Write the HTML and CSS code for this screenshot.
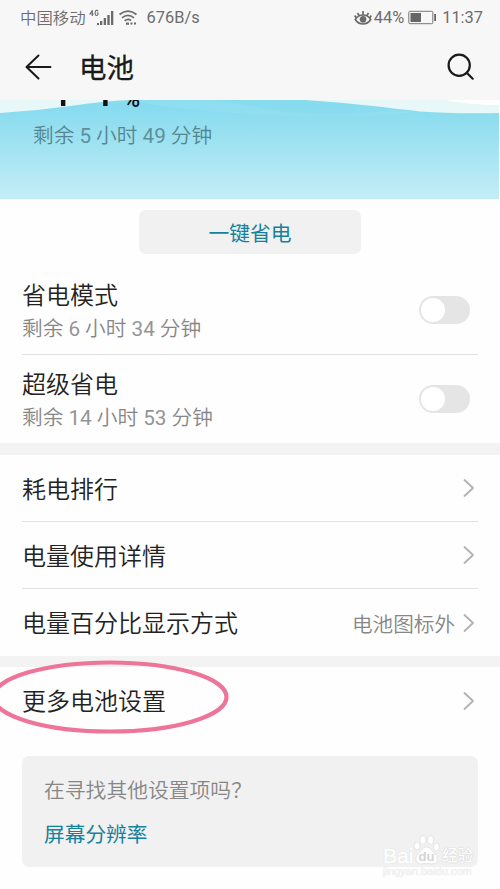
FILE: index.html
```html
<!DOCTYPE html>
<html lang="zh-CN">
<head>
<meta charset="utf-8">
<title>电池</title>
<link rel="stylesheet" href="styles.css">
</head>
<body>
<main class="screen">
  <div class="status">
    <span class="carrier">中国移动</span>
    <svg class="signal" width="26" height="18" viewBox="0 0 26 18" fill="#6b6b6b">
      <path d="M3.400 1.200 1 5h3.600M3.400 1.200V7M9 2.300C8.500 1 6.200 1 6.200 3v2c0 2 2.800 2 2.800 0V4H7.800" fill="none" stroke="#6b6b6b" stroke-width="1.100"/>
      <path d="M8 14h2v2H8zM11 12h2.300v4H11zM14.700 9H17v7h-2.300zM18.300 6h2.400v10h-2.400zM22 2h2.300v14H22z"/>
    </svg>
    <svg class="wifi" width="20" height="18" viewBox="0 0 20 18" fill="none" stroke="#6b6b6b" stroke-width="1.700">
      <path d="M1.500 5.500Q10-1.300 18.500 5.500M4 8.800Q10 4 16 8.800M6.600 11.800Q10 9 13 11.500"/>
      <path d="M8 14.700h3M12.500 14.500h2M16 14.500h2" stroke-width="2.200"/>
    </svg>
    <span class="speed">676B/s</span>
    <svg class="eye" width="18" height="16" viewBox="0 0 18 16" fill="none" stroke="#6b6b6b" stroke-width="1.700">
      <path d="M1.300 9.500C5 3.500 13 3.500 16.700 9.500 13 15.500 5 15.500 1.300 9.500ZM9 4.500V1M5 5.500 3.500 3M13 5.500 14.500 3M2 7.500.700 5.500M16 7.500l1.300-2"/>
      <circle cx="9" cy="9.300" r="2.500" fill="#6b6b6b"/>
    </svg>
    <span class="percent">44%</span>
    <svg class="battery" width="29" height="15" viewBox="0 0 29 15">
      <rect x=".8" y="1.300" width="24" height="12.400" rx="1" fill="none" stroke="#777" stroke-width="1"/>
      <path d="M2.500 3H13v9H2.500zM26.200 4H28v7h-1.800z" fill="#666"/>
    </svg>
    <span class="clock">11:37</span>
  </div>
  <header class="header">
    <svg class="back" width="28" height="28" viewBox="0 0 28 28" fill="none" stroke="#1a1a1a" stroke-width="2" stroke-linecap="round" stroke-linejoin="round"><path d="M13.500 2.500 1.500 14 13.500 25.500M1.500 14h24"/></svg>
    <h1 class="title">电池</h1>
    <svg class="search" width="28" height="28" viewBox="0 0 28 28" fill="none" stroke="#1a1a1a" stroke-width="2.200" stroke-linecap="round"><circle cx="12.200" cy="12.200" r="10.600"/><path d="m19.700 19.700 6 6"/></svg>
  </header>
  <section class="hero">
    <svg class="wave" width="499" height="99" viewBox="0 0 499 99">
      <defs><linearGradient id="water" x1="0" y1="0" x2="0" y2="1"><stop offset="0" stop-color="#86dbf0"/><stop offset=".12" stop-color="#8adcef"/><stop offset="1" stop-color="#c4edf6"/></linearGradient></defs>
      <rect width="499" height="99" fill="#e8f7f8"/>
      <path d="M445 0H499V5Q470 5 445 0Z" fill="#fff"/>
      <path d="M0 13Q35 11 70 6T130 0H305C350 3 390 8 420 11.500Q455 14 499 13V99H0Z" fill="url(#water)"/>
      <path d="M130 0H210Q235 2 270 10 330 19 390 10L420 12Q360 18 290 16 180 12 130 0Z" fill="#a5e5f2" opacity=".25"/>
    </svg>
    <div class="level"><span class="level-num">44</span><span class="level-unit">%</span></div>
    <p class="remain">剩余 <b>5</b> 小时 <b>49</b> 分钟</p>
  </section>
  <div class="action"><button class="save">一键省电</button></div>
  <section class="list">
    <div class="row tall">
      <div><div class="name">省电模式</div><div class="sub">剩余 <b>6</b> 小时 <b>34</b> 分钟</div></div>
      <span class="toggle"></span>
    </div>
    <div class="row tall">
      <div><div class="name">超级省电</div><div class="sub">剩余 <b>14</b> 小时 <b>53</b> 分钟</div></div>
      <span class="toggle"></span>
    </div>
  </section>
  <section class="list band">
    <div class="row"><span class="name">耗电排行</span><svg class="chevron" width="12" height="20" viewBox="0 0 12 20"><path d="m1.500 2 8.500 8-8.500 8"/></svg></div>
    <div class="row"><span class="name">电量使用详情</span><svg class="chevron" width="12" height="20" viewBox="0 0 12 20"><path d="m1.500 2 8.500 8-8.500 8"/></svg></div>
    <div class="row"><span class="name">电量百分比显示方式</span><span class="value">电池图标外</span><svg class="chevron" width="12" height="20" viewBox="0 0 12 20"><path d="m1.500 2 8.500 8-8.500 8"/></svg></div>
  </section>
  <section class="list band more">
    <div class="row"><span class="name">更多电池设置</span><svg class="chevron" width="12" height="20" viewBox="0 0 12 20"><path d="m1.500 2 8.500 8-8.500 8"/></svg></div>
    <svg class="ring" width="230" height="76" viewBox="0 0 230 76"><ellipse cx="110" cy="38" rx="116.500" ry="34.500" fill="none" stroke="#ef7499" stroke-width="4.200"/></svg>
  </section>
  <section class="card">
    <p class="question">在寻找其他设置项吗？</p>
    <a class="link">屏幕分辨率</a>
  </section>
  <div class="watermark">
    <div class="brand"><span class="bai">Bai</span>
      <svg class="paw" width="27" height="30" viewBox="0 0 27 30" fill="#fff" stroke="#dedede" stroke-width=".8"><ellipse cx="4" cy="11" rx="3" ry="4"/><ellipse cx="10" cy="5" rx="3" ry="4.200"/><ellipse cx="17.500" cy="5" rx="3" ry="4.200"/><ellipse cx="23.500" cy="12" rx="3" ry="4"/><path d="M13.500 12C9 12 9 16 5 19 1 23 3 29 8 29q5.500-1 11 0c6 0 7-7 3-10-4-3-4-7-8.500-7Z"/><text x="13.500" y="26" text-anchor="middle" class="du">du</text></svg>
      <span class="exp">经验</span>
    </div>
    <div class="site">jingyan.baidu.com</div>
  </div>
</main>
</body>
</html>
```
FILE: styles.css
```css
* { box-sizing: border-box; }
body { margin: 0; background: #fefefe; font-family: Roboto, "Noto Sans CJK SC", sans-serif; color: #222; }
h1, p { margin: 0; }
b { font-weight: 400; opacity: .88; }
svg { display: block; flex: none; }
.screen { position: relative; width: 500px; height: 889px; overflow: hidden; background: #fefefe; }
.status { display: flex; align-items: center; height: 35px; padding: 0 17px 0 20px; background: #f7f7f7; color: #6d6d6d; font-size: 16.400px; line-height: 35px; white-space: nowrap; }
.carrier { font-weight: 350; padding-top: 1px; }
.signal { margin-left: 3px; }
.wifi { margin-left: 3px; }
.speed { margin-left: 9px; }
.eye { margin-left: auto; }
.percent { margin-left: 2px; }
.battery { margin-left: 4px; }
.clock { margin-left: 5px; }
.header { display: flex; align-items: center; height: 65px; padding: 0 25px 2px; background: #f7f7f7; }
.title { margin: 4px 0 0 26px; font-size: 27.500px; font-weight: 400; line-height: 40px; color: #1a1a1a; -webkit-text-stroke: .3px #1a1a1a; }
.search { margin-left: auto; }
.hero { position: relative; height: 99px; overflow: hidden; }
.wave { position: absolute; left: 0; top: 0; }
.level { position: relative; display: flex; align-items: baseline; height: 22px; margin-top: -20px; padding-left: 33px; line-height: 0; color: #111; }
.level-num { font-size: 76px; font-weight: 300; }
.level-unit { position: relative; top: 1px; margin-left: 6px; font-size: 23px; font-weight: 500; }
.remain { position: relative; margin-top: 19px; padding-left: 33px; font-size: 20.700px; font-weight: 350; line-height: 30px; color: #55868f; }
.action { display: flex; justify-content: center; padding-top: 11px; }
.save { width: 222px; height: 44px; border: 0; border-radius: 7px; background: #f1f1f1; font: 400 20.800px/44px Roboto, "Noto Sans CJK SC", sans-serif; color: #16819b; padding: 2px 0 0; }
.list { padding: 0 22px; }
.list:not(.band) { padding-top: 12px; }
.list:not(.band) .row:last-child { height: 88px; }
.band { border-top: 12px solid #f3f3f3; }
.row { display: flex; align-items: center; justify-content: space-between; height: 67px; border-bottom: 1px solid #e2e2e2; }
.row:last-child { border-bottom: 0; }
.tall { height: 89px; }
.name { padding-top: 3px; font-size: 24px; line-height: 36px; font-weight: 350; }
.tall .name { padding-top: 2px; }
.sub { font-size: 20.700px; font-weight: 350; line-height: 30px; color: #868686; }
.toggle { margin-right: 8px; width: 51px; height: 28px; padding: 2px; border-radius: 14px; background: #e5e5e5; }
.toggle::before { content: ""; display: block; width: 24px; height: 24px; border-radius: 50%; background: #fff; }
.chevron { margin-right: 3px; fill: none; stroke: #b2b2b2; stroke-width: 1.800; stroke-linecap: round; stroke-linejoin: round; }
.value { margin: 0 8px 0 auto; font-size: 20.600px; font-weight: 350; color: #868686; }
.more { position: relative; border-top-width: 11px; }
.more .row { border-bottom: 0; }
.ring { position: absolute; left: 0; top: -8px; }
.card { height: 111px; margin: 22px 22px 0; padding: 20px 22px 0; border-radius: 7px; background: #f1f1f1; }
.question { font-size: 20.800px; font-weight: 350; line-height: 30px; color: #868686; }
.link { display: block; margin-top: 14px; font-size: 20.700px; font-weight: 400; line-height: 30px; color: #16819b; }
.watermark { position: absolute; left: 383px; top: 835px; color: #fff; text-shadow: 0 0 1px #ccc, 0 0 1px #ccc; }
.brand { display: flex; align-items: flex-end; height: 30px; }
.bai { font: 400 21px/24px "Liberation Sans", sans-serif; margin-bottom: -3px; -webkit-text-stroke: .6px #fff; }
.du { font: 700 13px "Liberation Sans", sans-serif; fill: #d4d4d4; stroke: none; text-shadow: none; }
.exp { margin-left: 2px; font-size: 15.500px; font-weight: 500; line-height: 18px; }
.site { font: 11px/13px "Liberation Sans", sans-serif; color: #f4f4f4; text-shadow: 0 0 1px #ddd; }
```
